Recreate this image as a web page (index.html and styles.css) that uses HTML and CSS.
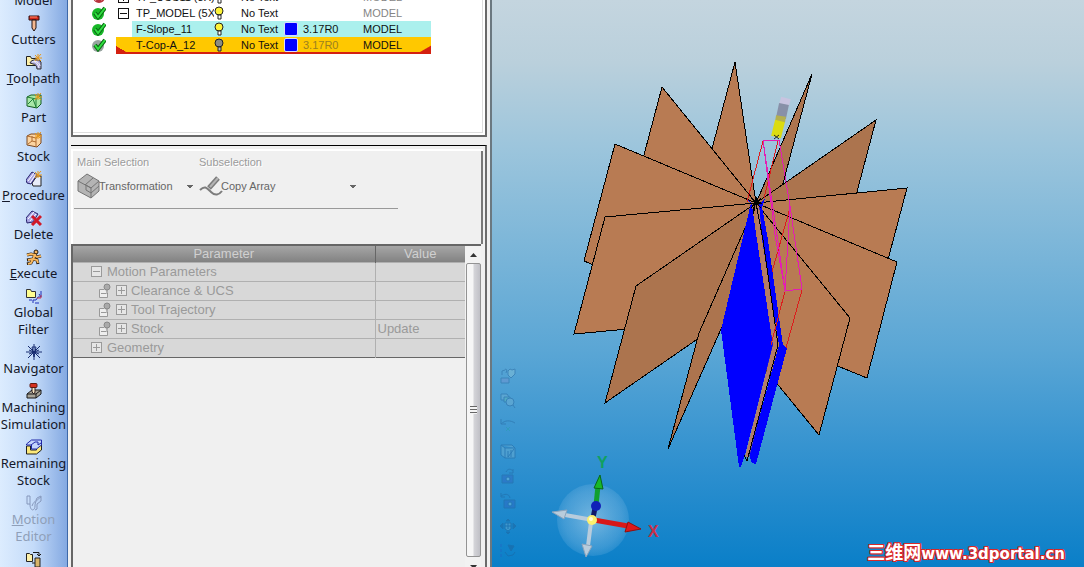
FILE: index.html
```html
<!DOCTYPE html>
<html lang="en">
<head>
<meta charset="utf-8">
<title>Toolpath editor</title>
<link rel="stylesheet" href="styles.css">
</head>
<body>
<nav class="sidebar">
  <button class="tool"><span class="icon"></span>Model</button>
  <button class="tool">
    <svg class="icon" viewBox="0 0 16 16"><path d="M3 1h10v4H3z" fill="#d42a1c" stroke="#301010"/><path d="M6 5h4v8l-2 3-2-3z" fill="#f4b890" stroke="#201010"/><path d="M4 2h7" stroke="#ff9070"/></svg>
    <span>Cutters</span></button>
  <button class="tool">
    <svg class="icon" viewBox="0 0 16 16"><path d="M0.500 2.500h4l1 2h5v7h-10z" fill="#fdf0a8" stroke="#222"/><path d="M4 9c1-4 9-4 11-1v7H11c0-3-2-5-4-5z" fill="#a9a4dc" stroke="#333"/><path d="M6 8c4-1 6 2 7 6M8 7c3 0 6 3 6 5" fill="none" stroke="#fff"/><path d="M9 1l6 6M15 0L9 7M12 0v7M9 4h7" stroke="#e89818"/></svg>
    <span><u>T</u>oolpath</span></button>
  <button class="tool">
    <svg class="icon" viewBox="0 0 16 16"><path d="M1 4l4-2h10v9l-4 4-10-2z" fill="#a8e8a8" stroke="#145c20"/><path d="M1 4l9 2v9M10 6l4-3M2 11l5-5 3 8" fill="none" stroke="#208038"/><path d="M9 1l6 6M15 0L9 7M12 0v7M9 4h7" stroke="#e89818"/></svg>
    <span>Part</span></button>
  <button class="tool">
    <svg class="icon" viewBox="0 0 16 16"><path d="M1 4l4-2h10v9l-4 4-10-2z" fill="#fcd4a0" stroke="#7c4820"/><path d="M1 4l9 2v9M10 6l4-3M2 12l4-3V4m0 5l4 1" fill="none" stroke="#b06c30"/><path d="M9 1l6 6M15 0L9 7M12 0v7M9 4h7" stroke="#e89818"/></svg>
    <span>Stock</span></button>
  <button class="tool">
    <svg class="icon" viewBox="0 0 16 16"><path d="M6 12l5-7h4v10H7z" fill="#e8ecf8" stroke="#222"/><path d="M0 9l6-8 5 3-6 9-4-1z" fill="#a8a4e4" stroke="#28246c"/><path d="M2 10l6-8M4 12l6-9" stroke="#fff"/><path d="M9 1l6 6M15 0L9 7M12 0v7M9 4h7" stroke="#e89818"/></svg>
    <span><u>P</u>rocedure</span></button>
  <button class="tool">
    <svg class="icon" viewBox="0 0 16 16"><path d="M0 8l6-7 6 3-5 8-6 1z" fill="#a8a4e4" stroke="#28246c"/><path d="M2 9l6-7M4 11l6-7" stroke="#fff"/><path d="M6 6l9 9M15 6l-9 9" stroke="#d01828" stroke-width="3"/></svg>
    <span>Delete</span></button>
  <button class="tool">
    <svg class="icon" viewBox="0 0 16 16"><circle cx="10" cy="3" r="2" fill="#f8b860" stroke="#201408"/><path d="M1 6l4-1 4 1-2 4-6 1M8 6l3 2 4-1M7 10l4 1 1 4M7 10l-2 4-4 1" fill="none" stroke="#201408" stroke-width="3"/><path d="M1 6l4-1 4 1-2 4-5 1M8 6l3 2 4-1M7 10l4 1 1 3M7 10l-2 4-3 1" fill="none" stroke="#f8b860" stroke-width="2"/></svg>
    <span><u>E</u>xecute</span></button>
  <button class="tool">
    <svg class="icon" viewBox="0 0 16 16"><path d="M0.500 1.500h4l1 2h4v6h-9z" fill="#ffff90" stroke="#333"/><path d="M15 3v6h-3l-2 3H7v3M6 12h-3M9 15h4M13 6l2 3" fill="none" stroke="#2030b8"/><path d="M11 10h4v-3" fill="none" stroke="#d04050"/></svg>
    <span>Global<br>Filter</span></button>
  <button class="tool">
    <svg class="icon" viewBox="0 0 16 16"><path d="M8 0v16M0 8h16M2 2l12 12M14 2L2 14" stroke="#182c70"/><path d="M6 3l2 10 2-10zM3 6l10 4M13 6L3 10" fill="none" stroke="#182c70"/></svg>
    <span>Navigator</span></button>
  <button class="tool">
    <svg class="icon" viewBox="0 0 16 16"><path d="M1 11l5-4h9v4l-5 4H1z" fill="#a8a498" stroke="#181818"/><path d="M1 11h9v4M10 11l5-4" fill="none" stroke="#181818"/><path d="M6 4h3v5l-1 2-2-2z" fill="#f4e4c0" stroke="#302020"/><rect x="4" y="0.500" width="7" height="4" rx="1" fill="#d43020" stroke="#601810"/></svg>
    <span>Machining<br>Simulation</span></button>
  <button class="tool">
    <svg class="icon" viewBox="0 0 16 16"><path d="M0.500 7h4v4h6v-3l5-4v7l-5 4h-10z" fill="#fce878" stroke="#202020"/><path d="M0.500 5l5-4h10v5l-5 4h-5V6h-5zM5 6l4-3h3v3l3-2" fill="#c4d4fc" stroke="#2028a8"/></svg>
    <span>Remaining<br>Stock</span></button>
  <button class="tool" disabled>
    <svg class="icon" viewBox="0 0 16 16"><path d="M1 1h3v8H1zM4 9c0 8 5 7 5 2s2-6 6-9M6 11c1-4 4-4 5-8M11 3l4-2v5l-4 3v5l-2 1" fill="none" stroke="#8698bc"/></svg>
    <span><u>M</u>otion<br>Editor</span></button>
  <button class="tool" aria-label="More">
    <svg class="icon" viewBox="0 0 16 16"><path d="M0.500 2.500h3l1 1h2v7h-6z" fill="#fdf0a8" stroke="#222"/><path d="M7 1.500h6v3M11 3l2 2 2-2M6 12h3" fill="none" stroke="#181818"/><path d="M9 7h5v9H9z" fill="#d8b468" stroke="#222"/></svg></button>
</nav>

<main class="panel">
  <section class="tree">
    <table class="ops">
      <colgroup><col class="c-state"><col class="c-exp"><col class="c-name"><col class="c-bulb"><col class="c-text"><col class="c-swatch"><col class="c-tool"><col class="c-model"></colgroup>
      <tr>
        <td><svg class="state" viewBox="0 0 14 14"><circle cx="7" cy="7" r="6" fill="#b8323c"/><path d="M3 10l6-6M9 10l2-3" stroke="#fff" stroke-width="2"/></svg></td>
        <td><span class="box plus"></span></td><td>TP_UCS11 (3X)</td>
        <td><svg class="bulb" viewBox="0 0 11 14"><circle cx="5" cy="5" r="4" fill="#fdf338" stroke="#222"/><path d="M4 9h3v4H4z" fill="#fff" stroke="#222"/></svg></td>
        <td>No Text</td><td></td><td></td><td class="dim">MODEL</td>
      </tr>
      <tr>
        <td><svg class="state" viewBox="0 0 14 14"><circle cx="6" cy="8" r="6" fill="#18b828"/><path d="M3 7l3 4 7-9" fill="none" stroke="#0a6a14" stroke-width="4"/><path d="M3 7l3 4 7-9" fill="none" stroke="#30e040" stroke-width="2"/></svg></td>
        <td><span class="box"></span></td><td>TP_MODEL (5X</td>
        <td><svg class="bulb" viewBox="0 0 11 14"><circle cx="5" cy="5" r="4" fill="#fdf338" stroke="#222"/><path d="M4 9h3v4H4z" fill="#fff" stroke="#222"/></svg></td>
        <td>No Text</td><td></td><td></td><td class="dim">MODEL</td>
      </tr>
      <tr class="cyan">
        <td><svg class="state" viewBox="0 0 14 14"><circle cx="6" cy="8" r="6" fill="#18b828"/><path d="M3 7l3 4 7-9" fill="none" stroke="#0a6a14" stroke-width="4"/><path d="M3 7l3 4 7-9" fill="none" stroke="#30e040" stroke-width="2"/></svg></td>
        <td></td><td>F-Slope_11</td>
        <td><svg class="bulb" viewBox="0 0 11 14"><circle cx="5" cy="5" r="4" fill="#fdf338" stroke="#222"/><path d="M4 9h3v4H4z" fill="#fff" stroke="#222"/></svg></td>
        <td>No Text</td><td><span class="swatch"></span></td><td>3.17R0</td><td>MODEL</td>
      </tr>
      <tr class="amber">
        <td><svg class="state" viewBox="0 0 14 14"><circle cx="6" cy="8" r="6" fill="#98a4a0"/><path d="M3 7l3 4 7-9" fill="none" stroke="#0a6a14" stroke-width="4"/><path d="M3 7l3 4 7-9" fill="none" stroke="#30e040" stroke-width="2"/></svg></td>
        <td></td><td>T-Cop-A_12</td>
        <td><svg class="bulb" viewBox="0 0 11 14"><circle cx="5" cy="5" r="4" fill="#8c8c80" stroke="#222"/><path d="M4 9h3v4H4z" fill="#bbb" stroke="#222"/></svg></td>
        <td>No Text</td><td><span class="swatch"></span></td><td class="faded">3.17R0</td><td>MODEL</td>
      </tr>
    </table>
  </section>

  <section class="lower">
    <div class="selection">
      <div class="choices">
        <div class="choice">
          <label for="main-sel">Main Selection</label>
          <div class="combo">
            <svg class="combo-icon" viewBox="0 0 24 26"><path d="M1 8l9-7 12 7v10l-8 7L1 18z" fill="#b4b4b4" stroke="#747474"/><path d="M1 8l13 7 8-7M14 15v10M8 12l8-7M14 15l-5-3v5l5 3 8-7" fill="none" stroke="#747474"/></svg>
            <select id="main-sel" disabled><option>Transformation</option></select>
          </div>
        </div>
        <div class="choice wide">
          <label for="sub-sel">Subselection</label>
          <div class="combo">
            <svg class="combo-icon" viewBox="0 0 24 26"><path d="M1 17c5-5 7-2 11 2s8 3 11-1" fill="none" stroke="#7c7c7c" stroke-width="2"/><path d="M10 15l9-10" stroke="#7c7c7c" stroke-width="5"/><path d="M11 14l8-9" stroke="#b4b4b4" stroke-width="2"/></svg>
            <select id="sub-sel" disabled><option>Copy Array</option></select>
          </div>
        </div>
      </div>
    </div>
    <div class="params">
      <div class="grid-area">
        <table class="grid">
          <colgroup><col class="g-name"><col class="g-value"></colgroup>
          <thead><tr><th>Parameter</th><th>Value</th></tr></thead>
          <tbody>
            <tr><td><div class="cell"><span class="box"></span>Motion Parameters</div></td><td></td></tr>
            <tr><td><div class="cell sub"><svg class="pin" viewBox="0 0 14 16"><path d="M6 6.500H1.500v8h8V10M3 10.500h5" fill="#eee" stroke="#999"/><circle cx="9" cy="4" r="3" fill="#aaa" stroke="#888"/><path d="M9 7v4" stroke="#888"/></svg><span class="box plus"></span>Clearance &amp; UCS</div></td><td></td></tr>
            <tr><td><div class="cell sub"><svg class="pin" viewBox="0 0 14 16"><path d="M6 6.500H1.500v8h8V10M3 10.500h5" fill="#eee" stroke="#999"/><circle cx="9" cy="4" r="3" fill="#aaa" stroke="#888"/><path d="M9 7v4" stroke="#888"/></svg><span class="box plus"></span>Tool Trajectory</div></td><td></td></tr>
            <tr><td><div class="cell sub"><svg class="pin" viewBox="0 0 14 16"><path d="M6 6.500H1.500v8h8V10M3 10.500h5" fill="#eee" stroke="#999"/><circle cx="9" cy="4" r="3" fill="#aaa" stroke="#888"/><path d="M9 7v4" stroke="#888"/></svg><span class="box plus"></span>Stock</div></td><td>Update</td></tr>
            <tr><td><div class="cell"><span class="box plus"></span>Geometry</div></td><td></td></tr>
          </tbody>
        </table>
      </div>
      <div class="scroll">
        <svg class="arrow" viewBox="0 0 15 17"><path d="M4 11l3.500-4 3.500 4z" fill="#333"/></svg>
        <div class="thumb"><span class="grip"></span></div>
        <svg class="arrow end" viewBox="0 0 15 10"><path d="M4 8h7l-3 4z" fill="#333"/></svg>
      </div>
    </div>
  </section>
</main>

<section class="view">
  <svg class="scene" viewBox="492 0 592 567" preserveAspectRatio="xMidYMid meet">
    <defs>
      <radialGradient id="orb"><stop offset="0" stop-color="#fff" stop-opacity=".4"/><stop offset=".8" stop-color="#cfe4f8" stop-opacity=".22"/><stop offset="1" stop-color="#cfe4f8" stop-opacity=".12"/></radialGradient>
    </defs>
    <g fill="#b87b53" stroke="#000" shape-rendering="crispEdges">
      <path d="M756 203L735 62 704 179 725 320z"/>
      <path d="M756 203L662 87 631 204 725 320z"/>
      <path d="M756 203L615 144 584 261 725 320z"/>
      <path d="M756 203L605 217 574 334 725 320z"/>
      <path d="M756 203L636 286 605 403 725 320z" fill="#ac744e"/>
      <path d="M756 203L812 74 781 191 725 320z" fill="#ac744e"/>
      <path d="M756 203L876 120 845 237 725 320z" fill="#ac744e"/>
      <path d="M756 203L907 188 876 305 725 320z"/>
      <path d="M756 203L897 262 867 378 725 320z"/>
      <path d="M756 203L850 318 819 435 725 320z"/>
      <path d="M756 203L699 333 668 449 725 320z" fill="#ac744e"/>
    </g>
    <g fill="#00f" shape-rendering="crispEdges">
      <path d="M747 199l4 4-30 127 18 137h2l4-12 28-110-16-105-5-35z"/>
      <path d="M765 199l-3 8 6 33 15 105 4 3-31 116-4-1-3-8 30-110-17-105-3-36z"/>
    </g>
    <path d="M757 205L760 240 775 345 747 457" fill="none" stroke="#b47c68" stroke-width="4"/>
    <path d="M756 203L763 240 778 345 747 461 744 455" fill="none" stroke="#000" shape-rendering="crispEdges"/>
    <g fill="none" shape-rendering="crispEdges">
      <path d="M763 141L747 202M778 141L764 198M790 208L772 272M785 291L771 345M802 290L786 348" stroke="#dc1c1c"/>
      <path d="M785 290L763 140H779L790 206 802 289 785 291 790 206M763 140L775 235 785 290" stroke="#e41cb4"/>
      <path d="M751 198l10 10M761 198l-10 10M750 203h12M756 197v12" stroke="#000"/>
    </g>
    <g fill="none" stroke-width="10">
      <path d="M786 98L784 105" stroke="#c8c4e0"/>
      <path d="M784 104L781 118" stroke="#8890a8"/>
      <path d="M781 116L780 122" stroke="#b4b050"/>
      <path d="M780 121L776 137" stroke="#dcdc10"/>
      <path d="M774 135l5 4M779 135l-5 4" stroke="#222" stroke-width="1"/>
    </g>
    <circle cx="593" cy="520" r="36" fill="url(#orb)"/>
    <path d="M593 520L565 515M591 522L588 546" stroke="#b8ccdc" stroke-width="4"/>
    <path d="M552 512l15-2-3 9zM586 557l-4-13 10 2z" fill="#b8ccdc" stroke="#8ca4bc"/>
    <path d="M594 520L628 526" stroke="#d81818" stroke-width="5"/>
    <path d="M641 529l-16 3 3-10z" fill="#e01818" stroke="#901010"/>
    <path d="M596 505L598 486" stroke="#10a030" stroke-width="5"/>
    <path d="M600 475l-6 13 9 1z" fill="#18b828" stroke="#086818"/>
    <path d="M593 518L595 508" stroke="#101868" stroke-width="5"/>
    <circle cx="596" cy="506" r="5" fill="#1020b8"/>
    <circle cx="592" cy="520" r="5" fill="#fcf070"/>
    <circle cx="591" cy="519" r="2" fill="#fffcd8"/>
    <text class="axis" x="597" y="468" fill="#10a060">Y</text>
    <text class="axis" x="648" y="537" fill="#c83048">X</text>
  </svg>
  <div class="view-tools">
    <button aria-label="Shade"><svg viewBox="0 0 16 16"><path d="M1 10h8v5H1z" fill="#7890d0"/><path d="M8 3l2-2 2 1 3-1v5l-4 4-3-3z" fill="#90c8d8"/><path d="M2 7V3l3-1M5 1l2 1-1 3" fill="none"/></svg></button>
    <button aria-label="Zoom"><svg viewBox="0 0 16 16"><path d="M1 1h6l2 3-2 3H1z"/><path d="M4 4h6v5H4z" fill="#60c0b0"/><circle cx="10" cy="9" r="4"/><path d="M13 12l2 3"/></svg></button>
    <button aria-label="Rotate"><svg viewBox="0 0 16 16"><path d="M1 6c4-4 9-4 14-1M1 1v5h5" fill="none"/><path d="M6 9l4 4M10 9l-4 4" stroke="#20a0a0"/></svg></button>
    <button aria-label="Section"><svg viewBox="0 0 16 16"><path d="M1 2h11l3 3v10H5l-4-3zM1 2l4 3h10M5 5v10M8 8v6M11 7v7M8 14l6-8"/></svg></button>
    <button aria-label="Save view"><svg viewBox="0 0 16 16"><path d="M2 7h11v8H2z" fill="#3060c0"/><path d="M6 4c2-4 5-3 7-1M13 1v4H9" fill="none"/><circle cx="8" cy="11" r="2" fill="#90c8e8"/></svg></button>
    <button aria-label="Restore view"><svg viewBox="0 0 16 16"><path d="M4 7h11v8H4z" fill="#3060c0"/><path d="M10 5C9 0 4 1 1 3M1 0v4h4" fill="none"/><circle cx="10" cy="11" r="2" fill="#90c8e8"/></svg></button>
    <button aria-label="Pan"><svg viewBox="0 0 16 16"><path d="M5 5h6v6l-3 2-3-2zM8 5v6M5 8h6"/><path d="M0 8l3-3v6zM16 8l-3-3v6zM6 3l2-2 2 2zM6 14l2 2 2-2z" fill="#205c94"/></svg></button>
    <button aria-label="Select"><svg viewBox="0 0 16 16"><path d="M1 1v3M1 6v3M1 11v3" stroke="#3050c0"/><path d="M8 2l6 1-3 5z" fill="#205c94"/><path d="M5 9l3 4 5-1 2-3" fill="none"/></svg></button>
  </div>
  <div class="mark"><span class="cjk" lang="zh">三维网</span>www.3dportal.cn</div>
</section>
</body>
</html>
```
FILE: styles.css
```css
* { box-sizing: border-box; }
body {
  margin: 0;
  height: 100vh;
  display: flex;
  overflow: hidden;
  background: #f0f0f0;
  font: 11px "Liberation Sans", Arial, sans-serif;
  color: #111;
}
button { border: 0; padding: 0; background: none; color: inherit; font: inherit; }
svg { display: block; }

.sidebar {
  flex: 0 0 68px;
  display: flex;
  flex-direction: column;
  overflow: hidden;
  border-right: 1px solid #3d68a8;
  background: linear-gradient(90deg, #dcecfe 0, #c4dbf9 50%, #84a9e2 100%);
}
.tool {
  flex: none;
  display: flex;
  flex-direction: column;
  align-items: center;
  padding-top: 6px;
  white-space: nowrap;
  font: 13px/17px "Noto Sans", sans-serif;
  color: #14182a;
}
.tool:first-child { margin-top: -30px; }
.tool:disabled { color: #8f9fb8; }
.icon { width: 16px; height: 16px; flex: none; }

.panel {
  flex: 0 0 424px;
  display: flex;
  flex-direction: column;
  padding: 0 3px;
  border-right: 2px solid #6b7880;
}
.tree {
  flex: 0 0 137px;
  overflow: hidden;
  background: #fff;
  border: solid #686868;
  border-width: 0 2px 2px;
  box-shadow: inset -2px -2px #fff, inset -3px -3px #ddd;
}
.ops { table-layout: fixed; width: 347px; margin: -11px 0 0 11px; border-collapse: collapse; }
.c-state { width: 32px; } .c-exp { width: 16px; } .c-name { width: 82px; } .c-bulb { width: 14px; }
.c-text { width: 56px; } .c-swatch { width: 15px; } .c-tool { width: 56px; } .c-model { width: 76px; }
.ops td { height: 16px; padding: 0; white-space: nowrap; overflow: hidden; line-height: 14px; }
.ops td:nth-child(3) { padding-left: 4px; }
.ops td:nth-child(5) { padding-left: 13px; }
.ops td:nth-child(7) { padding-left: 4px; }
.ops td:nth-child(8) { padding-left: 8px; }
.state { width: 14px; height: 14px; margin-left: 8px; }
.bulb { width: 11px; height: 14px; }
.dim { color: #858585; }
.faded { color: #9a8020; }
.cyan td:nth-child(n+3) { background: #abf0ed; }
.amber td:nth-child(n+2) { background: #ffc800; border-bottom: 2px solid #d42010; }
.amber td:nth-child(2) { background: linear-gradient(30deg, #d42010 24%, #ffc800 25%); }
.amber td:nth-child(8) { background: linear-gradient(-30deg, #d42010 5px, #ffc800 6px); }
.swatch { display: block; width: 14px; height: 14px; background: #00f; border: 1px solid #dcdcfc; border-radius: 2px; }
.box {
  flex: none;
  display: block;
  width: 11px;
  height: 11px;
  border: 1px solid;
  background: linear-gradient(currentColor, currentColor) center / 7px 1px no-repeat;
}
.box.plus {
  background: linear-gradient(currentColor, currentColor) center / 7px 1px no-repeat,
    linear-gradient(currentColor, currentColor) center / 1px 7px no-repeat;
}
.ops .box { margin-left: 2px; }

.lower {
  flex: 1;
  min-height: 0;
  display: flex;
  flex-direction: column;
  margin-top: 8px;
  padding-top: 3px;
  border-top: 1px solid #000;
  border-right: 2px solid #6b6b6b;
}
.selection {
  flex: 0 0 95px;
  margin-right: 2px;
  padding: 4px 0 0 1px;
  border: solid #fff;
  border-width: 2px 0 0 2px;
  box-shadow: inset -2px 0 #777;
}
.choices {
  display: flex;
  width: 324px;
  height: 54px;
  border-bottom: 1px solid #999;
}
.choice { width: 122px; padding-left: 3px; }
.choice.wide { flex: 1; }
.choice label { display: block; line-height: 14px; color: #9b9b9b; text-shadow: 1px 1px #fff; }
.combo { display: flex; align-items: center; height: 26px; margin-top: 4px; }
.combo-icon { width: 24px; height: 26px; flex: none; }
.combo select {
  flex: 1;
  min-width: 0;
  height: 20px;
  margin-left: -2px;
  padding: 0;
  border: 0;
  appearance: none;
  font: inherit;
  color: #666;
  opacity: 1;
  background: linear-gradient(to bottom right, #666 50%, transparent 51%) right 3px center / 3px 3px no-repeat,
    linear-gradient(to bottom left, #666 50%, transparent 51%) right 6px center / 3px 3px no-repeat;
}
.wide .combo { width: 160px; }
.params {
  flex: 1;
  min-height: 0;
  display: flex;
  border: solid #666;
  border-width: 2px 0 0 2px;
  margin-right: 4px;
}
.grid-area { flex: 1; }
.grid {
  width: 100%;
  table-layout: fixed;
  border-collapse: collapse;
  border-bottom: 1px solid #666;
  font-size: 13px;
  color: #9a9a9a;
  background: #d8d8d8;
}
.g-name { width: 302px; }
.grid th {
  height: 16px;
  padding: 0;
  font-weight: normal;
  line-height: 15px;
  color: #d0d0d0;
  background: linear-gradient(#a6a6a6, #828282);
}
.grid th + th { border-left: 1px solid #666; }
.grid td { height: 19px; padding: 0 0 0 2px; line-height: 17px; border-top: 1px solid #b0b0b0; }
.grid td + td { border-left: 1px solid #b0b0b0; }
.cell { display: flex; align-items: center; gap: 5px; padding-left: 16px; }
.cell.sub { padding-left: 23px; gap: 4px; }
.pin { width: 14px; height: 16px; }
.cell .box { background-color: #e6e6e6; }
.scroll { flex: 0 0 16px; display: flex; flex-direction: column; padding-left: 1px; background: #f2f2f2; }
.arrow { width: 15px; height: 17px; }
.arrow.end { height: 10px; }
.thumb {
  flex: 1;
  display: flex;
  align-items: center;
  justify-content: center;
  border: 1px solid #939393;
  border-radius: 2px;
  background: linear-gradient(90deg, #f6f6f6 45%, #d4d4d8 55%, #c0c0c6);
}
.grip { width: 7px; height: 8px; background: repeating-linear-gradient(#666 0 1px, #f4f4f4 1px 3px); }

.view {
  flex: 1;
  min-width: 0;
  position: relative;
  background: linear-gradient(#c4d5df 0, #bad0dc 11%, #9cc5dc 26%, #5aa6d5 62%, #2f90cf 82%, #0a7fc8 100%);
}
.scene { width: 100%; height: 100%; }
.axis { font: bold 16px "Liberation Sans", Arial, sans-serif; }
.view-tools { position: absolute; left: 8px; bottom: 8px; display: flex; flex-direction: column; gap: 9px; }
.view-tools svg { width: 16px; height: 16px; fill: #78b4d2; stroke: #205c94; opacity: 0.4; }
.mark {
  position: absolute;
  right: 19px;
  bottom: 3px;
  white-space: nowrap;
  font: bold 15px/20px "DejaVu Sans", sans-serif;
  color: #fff;
  text-shadow: 1px 0 #d82828, -1px 0 #d82828, 0 1px #d82828, 0 -1px #d82828,
    1px 1px #d82828, -1px 1px #d82828, 1px -1px #d82828, -1px -1px #d82828;
}
.cjk { font: bold 18px/20px "Noto Sans CJK SC", sans-serif; }
```
